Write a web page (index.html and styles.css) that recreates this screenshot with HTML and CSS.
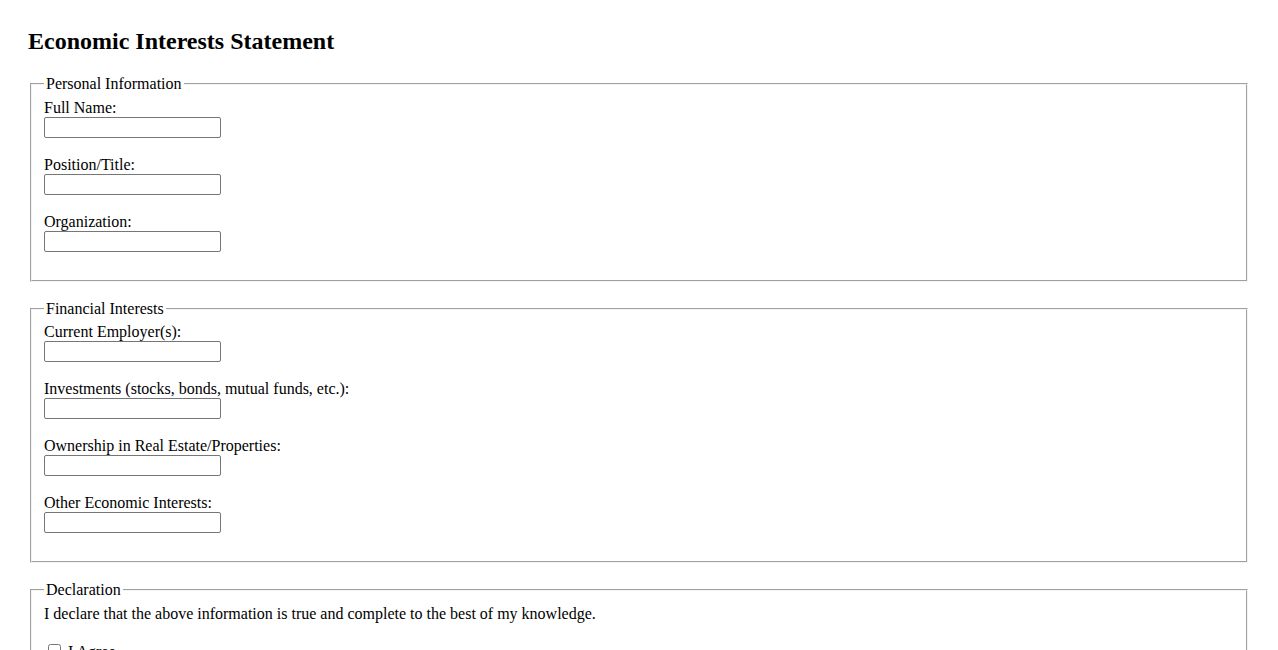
FILE: index.html
```html
<!DOCTYPE html>
<html>
<head>
<meta charset="utf-8">
<title>Economic Interests Statement</title>
<link rel="stylesheet" href="styles.css">
</head>
<body>
<h2 class="title">Economic Interests Statement</h2>
<form class="form">
<fieldset class="group">
<legend class="legend">Personal Information</legend>
<label class="label" for="name">Full Name:</label><br>
<input class="field" type="text" id="name"><br><br>
<label class="label" for="position">Position/Title:</label><br>
<input class="field" type="text" id="position"><br><br>
<label class="label" for="org">Organization:</label><br>
<input class="field" type="text" id="org"><br><br>
</fieldset>
<fieldset class="group">
<legend class="legend">Financial Interests</legend>
<label class="label" for="employer">Current Employer(s):</label><br>
<input class="field" type="text" id="employer"><br><br>
<label class="label" for="invest">Investments (stocks, bonds, mutual funds, etc.):</label><br>
<input class="field" type="text" id="invest"><br><br>
<label class="label" for="realestate">Ownership in Real Estate/Properties:</label><br>
<input class="field" type="text" id="realestate"><br><br>
<label class="label" for="other">Other Economic Interests:</label><br>
<input class="field" type="text" id="other"><br><br>
</fieldset>
<fieldset class="group">
<legend class="legend">Declaration</legend>
I declare that the above information is true and complete to the best of my knowledge.<br><br>
<input class="check" type="checkbox" id="agree"> <label class="label" for="agree">I Agree</label><br><br>
<label class="label" for="sig">Signature:</label><br>
<input class="field" type="text" id="sig"><br><br>
</fieldset>
</form>
</body>
</html>
```
FILE: styles.css
```css
html, body {
  background: #ffffff;
}
body {
  margin: 0;
  padding: 28px 28px 20px 28px;
  font-family: "Liberation Serif", "Times New Roman", serif;
  font-size: 16px;
  color: #000000;
}
.title {
  margin: 0 0 19.92px 0;
  font-size: 24px;
  font-weight: bold;
}
.form {
  margin: 0;
}
.group {
  margin: 0 2px 18px 2px;
  padding: 5.6px 12px 10px 12px;
  border: 2px groove #f4f4f4;
}
.legend {
  padding: 0 2px;
}
.field {
  box-sizing: border-box;
  width: 177px;
  height: 21px;
  margin: 0;
  padding: 1px 2px;
  border: 1px solid #767676;
  border-radius: 2px;
  font-family: "Liberation Sans", Arial, sans-serif;
  font-size: 13.33px;
  vertical-align: baseline;
}
.check {
  width: 13px;
  height: 13px;
  margin: 3px 3px 3px 4px;
}
```
